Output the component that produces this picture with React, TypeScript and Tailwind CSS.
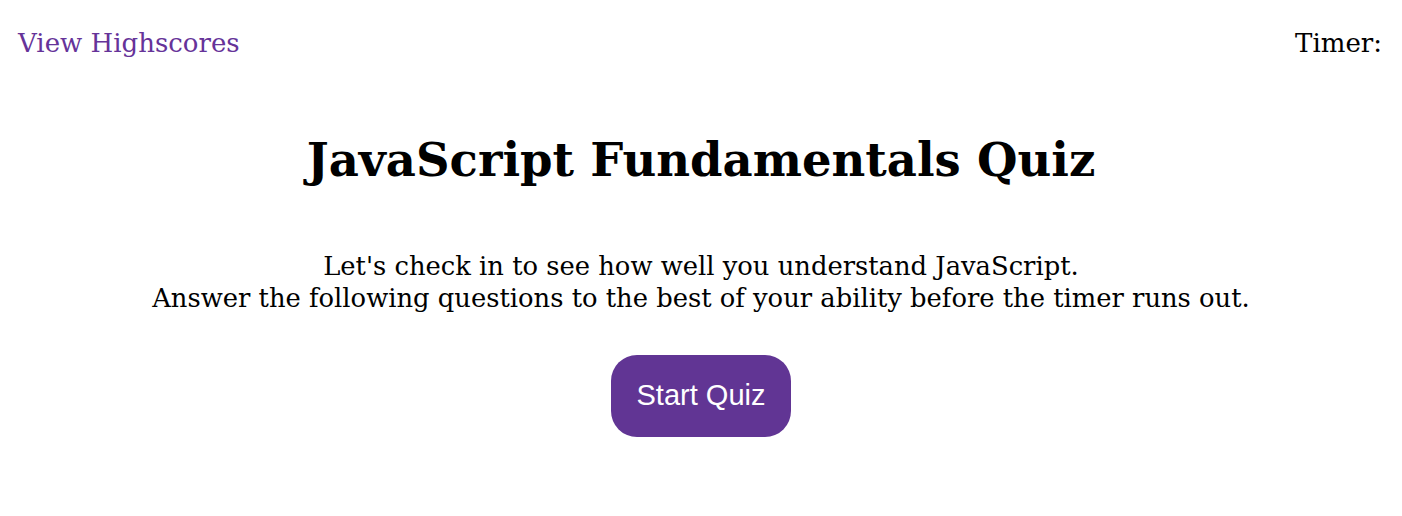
import React from 'react'

export default function App() {
  return (
    <div className="w-screen h-[516px] bg-white text-black" style={{ fontFamily: '"DejaVu Serif", serif' }}>
      <header className="flex justify-between items-center px-[18px] pt-[26px] text-[26px] leading-[34px]">
        <a href="#" className="text-[#663399]">View Highscores</a>
        <span className="pr-[2px]">Timer:</span>
      </header>

      <main className="flex flex-col items-center text-center">
        <h1 className="mt-[68px] text-[46.5px] leading-[64px] font-bold">JavaScript Fundamentals Quiz</h1>
        <p className="mt-[58px] text-[25.8px] leading-[32px]">
          Let's check in to see how well you understand JavaScript.
          <br />
          Answer the following questions to the best of your ability before the timer runs out.
        </p>
        <button
          className="mt-[41px] w-[180px] h-[82px] rounded-[26px] bg-[#613594] text-white text-[29px]"
          style={{ fontFamily: '"Liberation Sans", Arial, sans-serif' }}
        >
          Start Quiz
        </button>
      </main>
    </div>
  )
}
